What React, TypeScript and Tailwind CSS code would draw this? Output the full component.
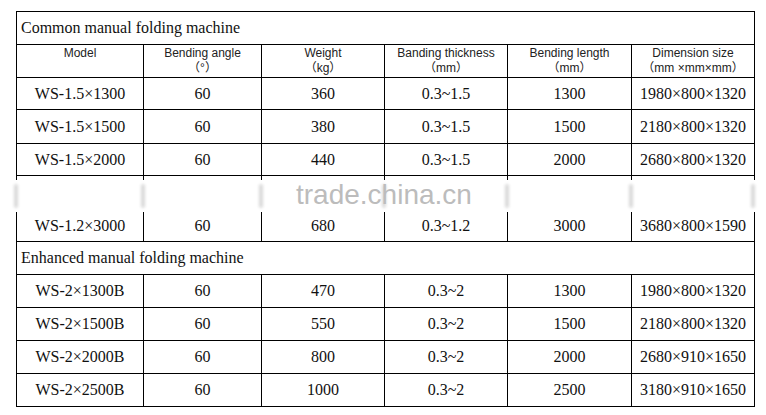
import React from 'react';

interface Row {
  model: string;
  angle: string;
  weight: string;
  thickness: string;
  length: string;
  size: string;
}

const common: Row[] = [
  { model: 'WS-1.5×1300', angle: '60', weight: '360', thickness: '0.3~1.5', length: '1300', size: '1980×800×1320' },
  { model: 'WS-1.5×1500', angle: '60', weight: '380', thickness: '0.3~1.5', length: '1500', size: '2180×800×1320' },
  { model: 'WS-1.5×2000', angle: '60', weight: '440', thickness: '0.3~1.5', length: '2000', size: '2680×800×1320' },
];

const tall: Row = { model: 'WS-1.2×3000', angle: '60', weight: '680', thickness: '0.3~1.2', length: '3000', size: '3680×800×1590' };

const enhanced: Row[] = [
  { model: 'WS-2×1300B', angle: '60', weight: '470', thickness: '0.3~2', length: '1300', size: '1980×800×1320' },
  { model: 'WS-2×1500B', angle: '60', weight: '550', thickness: '0.3~2', length: '1500', size: '2180×800×1320' },
  { model: 'WS-2×2000B', angle: '60', weight: '800', thickness: '0.3~2', length: '2000', size: '2680×910×1650' },
  { model: 'WS-2×2500B', angle: '60', weight: '1000', thickness: '0.3~2', length: '2500', size: '3180×910×1650' },
];

const headers = [
  ['Model', ''],
  ['Bending angle', '（°）'],
  ['Weight', '（kg）'],
  ['Banding thickness', '（mm）'],
  ['Bending length', '（mm）'],
  ['Dimension size', '（mm ×mm×mm）'],
];

const serif = "font-['Liberation_Serif','Times_New_Roman',serif]";
const cell = 'border border-black text-center p-0';

function DataRow({ r, h = 'h-[33px]', bottom = false }: { r: Row; h?: string; bottom?: boolean }) {
  const v = bottom ? 'align-bottom pb-[7px]' : 'align-middle';
  return (
    <tr className={h}>
      {[r.model, r.angle, r.weight, r.thickness, r.length, r.size].map((t, i) => (
        <td key={i} className={`${cell} ${v}`}>{t}</td>
      ))}
    </tr>
  );
}

// watermark left a blurred gap in the grid lines
function Smudge({ left }: { left: number }) {
  return (
    <div className="absolute top-[180px] h-[32px] w-[10px] -translate-x-1/2" style={{ left }}>
      <div className="absolute inset-0 bg-white" />
      <div className="absolute left-[3px] top-[4px] h-[24px] w-[4px] rounded-full bg-[#d9d9d9] blur-[1.5px]" />
    </div>
  );
}

export default function App() {
  return (
    <div className="relative w-[766px] h-[415px] bg-white text-[#111]">
      <div className="pt-[11px] pl-[16px]">
        <table className={`table-fixed border-collapse w-[738px] text-[16px] leading-none ${serif}`}>
          <colgroup>
            <col className="w-[127px]" />
            <col className="w-[118px]" />
            <col className="w-[123px]" />
            <col className="w-[123px]" />
            <col className="w-[124px]" />
            <col className="w-[123px]" />
          </colgroup>
          <tbody>
            <tr className="h-[33px]">
              <td colSpan={6} className="border border-black text-left pl-[4px] align-middle">
                Common manual folding machine
              </td>
            </tr>
            <tr className="h-[33px]">
              {headers.map(([a, b], i) => (
                <td key={i} className={`${cell} align-top pt-[1px] font-['Liberation_Sans',Arial,'Noto_Sans_CJK_SC',sans-serif] text-[12px] leading-[15px] text-[#222]`}>
                  <div>{a}</div>
                  {b && <div>{b}</div>}
                </td>
              ))}
            </tr>
            {common.map((r, i) => (
              <DataRow key={i} r={r} h={i === 1 ? 'h-[34px]' : 'h-[32px]'} />
            ))}
            <DataRow r={tall} h="h-[66px]" bottom />
            <tr className="h-[33px]">
              <td colSpan={6} className="border border-black text-left pl-[4px] align-middle">
                Enhanced manual folding machine
              </td>
            </tr>
            {enhanced.map((r, i) => (
              <DataRow key={i} r={r} />
            ))}
          </tbody>
        </table>
      </div>

      {[16, 143, 261, 384, 507, 631, 753].map((x) => (
        <Smudge key={x} left={x} />
      ))}

      <div className="absolute left-[296px] top-[181px] font-['Liberation_Sans',Arial,sans-serif] text-[28px] leading-none text-[#bcbcbc]">
        trade.china.cn
      </div>
    </div>
  );
}
